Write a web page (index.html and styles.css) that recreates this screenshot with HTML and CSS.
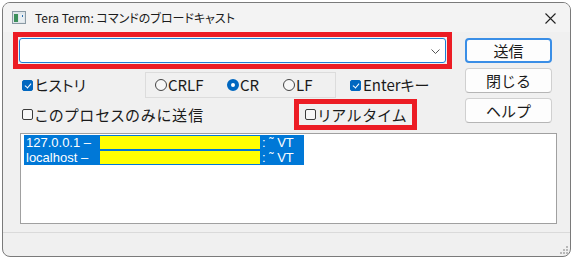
FILE: index.html
```html
<!DOCTYPE html>
<html lang="ja">
<head>
    <meta charset="UTF-8">
    <title>Tera Term: コマンドのブロードキャスト</title>
    <link rel="stylesheet" href="styles.css">
</head>
<body>
    <div class="window">
        <div class="titlebar">
            <svg class="app-icon" width="14" height="13" viewBox="0 0 14 13">
                <rect x="0.5" y="0.5" width="13" height="12" fill="#dfe6ea" stroke="#8a9aa4"/>
                <rect x="2" y="3" width="4" height="8" fill="#3c8f5a"/>
                <rect x="7" y="3" width="5" height="8" fill="#e8eef2"/>
                <rect x="10" y="4" width="1" height="2" fill="#2a6fb0"/>
            </svg>
            <span class="title">Tera Term: コマンドのブロードキャスト</span>
            <svg class="close" width="11" height="11" viewBox="0 0 11 11">
                <path d="M0.5 0.5 L10.5 10.5 M10.5 0.5 L0.5 10.5" stroke="#222" stroke-width="1.1"/>
            </svg>
        </div>

        <div class="content">
            <div class="top">
                <div class="main">
                    <div class="mark combo-mark">
                        <div class="combo">
                            <svg class="chevron" width="9" height="5" viewBox="0 0 9 5">
                                <path d="M0.5 0.5 L4.5 4.5 L8.5 0.5" fill="none" stroke="#555" stroke-width="1"/>
                            </svg>
                        </div>
                    </div>

                    <div class="options">
                        <label class="check history"><span class="box checked"></span>ヒストリ</label>
                        <div class="group">
                            <label class="radio r-crlf"><span class="dot"></span>CRLF</label>
                            <label class="radio r-cr"><span class="dot on"></span>CR</label>
                            <label class="radio r-lf"><span class="dot"></span>LF</label>
                        </div>
                        <label class="check enter"><span class="box checked"></span>Enterキー</label>
                    </div>

                    <div class="options second">
                        <label class="check only"><span class="box"></span>このプロセスのみに送信</label>
                        <div class="mark realtime-mark">
                            <label class="check realtime"><span class="box"></span>リアルタイム</label>
                        </div>
                    </div>
                </div>

                <div class="buttons">
                    <button class="default">送信</button>
                    <button>閉じる</button>
                    <button>ヘルプ</button>
                </div>
            </div>

            <div class="list">
                <div class="row"><span class="host">127.0.0.1 –</span><span class="hide"></span><span class="tail">: ˜ VT</span></div>
                <div class="row"><span class="host">localhost –</span><span class="hide"></span><span class="tail">: ˜ VT</span></div>
            </div>
        </div>

        <div class="statusbar">
            <svg class="grip" width="9" height="9" viewBox="0 0 9 9">
                <rect x="7" y="1" width="2" height="2" fill="#b8b8b8"/>
                <rect x="4" y="4" width="2" height="2" fill="#b8b8b8"/>
                <rect x="7" y="4" width="2" height="2" fill="#b8b8b8"/>
                <rect x="1" y="7" width="2" height="2" fill="#b8b8b8"/>
                <rect x="4" y="7" width="2" height="2" fill="#b8b8b8"/>
                <rect x="7" y="7" width="2" height="2" fill="#b8b8b8"/>
            </svg>
        </div>
    </div>
</body>
</html>
```

FILE: styles.css
```css
* {
    box-sizing: border-box;
}
body {
    margin: 0;
    background: #ffffff;
    font-family: "Noto Sans CJK JP", "Noto Sans", sans-serif;
    font-feature-settings: "palt";
    color: #1a1a1a;
}
.window {
    margin: 2px 0 0 2px;
    width: 569px;
    height: 255px;
    border: 1px solid #7a7a7a;
    border-radius: 8px;
    background: #f0f0f0;
    overflow: hidden;
    display: flex;
    flex-direction: column;
}
.titlebar {
    height: 29px;
    display: flex;
    align-items: center;
    padding: 0 14px 0 9px;
    background: #f3f3f3;
}
.app-icon {
    flex: none;
}
.title {
    margin-left: 9px;
    font-size: 12px;
    flex: 1;
    color: #1b1b1b;
}
.close {
    flex: none;
    margin-top: 1px;
}
.content {
    padding: 0 0 0 10px;
}
.top {
    display: flex;
    gap: 13px;
}
.main {
    width: 439px;
}
.mark {
    border: 5px solid #ec1c24;
}
.combo-mark {
    padding: 1px;
    height: 37px;
}
.combo {
    height: 25px;
    background: #ffffff;
    border: 1px solid #1d7fd6;
    border-radius: 3px;
    display: flex;
    align-items: center;
    justify-content: flex-end;
    padding-right: 5px;
}
.chevron {
    margin-top: 2px;
}
.options {
    display: flex;
    align-items: center;
    margin-top: 3px;
    height: 26px;
    font-size: 15px;
}
.check, .radio {
    display: flex;
    align-items: center;
    white-space: nowrap;
    line-height: 16px;
}
.box {
    flex: none;
    width: 11px;
    height: 11px;
    border: 1px solid #3b3b3b;
    border-radius: 2px;
    background: #f7f7f7;
    margin-right: 2px;
    position: relative;
}
.box.checked {
    background: #0067c0;
    border-color: #0067c0;
}
.box.checked::after {
    content: "";
    position: absolute;
    left: 3px;
    top: 1px;
    width: 3px;
    height: 5px;
    border: solid #ffffff;
    border-width: 0 1px 1px 0;
    transform: rotate(40deg);
}
.history {
    margin-left: 9px;
    width: 123px;
}
.group {
    width: 191px;
    height: 26px;
    border: 1px solid #dcdcdc;
    display: flex;
    align-items: center;
    padding-left: 9px;
}
.dot {
    flex: none;
    width: 12px;
    height: 12px;
    border: 1px solid #444;
    border-radius: 50%;
    margin-right: 1px;
    background: #f7f7f7;
}
.dot.on {
    border: 4px solid #0067c0;
    background: #ffffff;
}
.r-crlf {
    width: 72px;
}
.r-cr {
    width: 56px;
}
.enter {
    margin-left: 14px;
}
.second {
    height: 31px;
    margin-top: 1px;
}
.only {
    margin-left: 9px;
    width: 272px;
    letter-spacing: 1.1px;
}
.realtime-mark {
    height: 31px;
    width: 123px;
    display: flex;
    align-items: center;
    padding-left: 6px;
}
.realtime {
    letter-spacing: 1.6px;
}
.buttons {
    padding-top: 6px;
    display: flex;
    flex-direction: column;
    gap: 5px;
}
button {
    width: 87px;
    height: 25px;
    background: #fdfdfd;
    border: 1px solid #d0d0d0;
    border-bottom-color: #b5b5b5;
    border-radius: 4px;
    font-family: inherit;
    font-size: 15px;
    color: #1a1a1a;
    padding: 0;
    line-height: 1;
}
button.default {
    border: 2px solid #3a8ee6;
}
.list {
    margin: 3px 0 0 7px;
    width: 537px;
    height: 91px;
    background: #ffffff;
    border: 1px solid #a0a0a0;
    padding: 1px 0 0 3px;
    font-family: "Liberation Sans", "Noto Sans", sans-serif;
    font-size: 13px;
}
.row {
    width: 280px;
    height: 15px;
    background: #0078d7;
    color: #ffffff;
    display: flex;
    align-items: center;
    line-height: 15px;
    padding-left: 2px;
}
.host {
    width: 74px;
    white-space: nowrap;
}
.hide {
    flex: none;
    width: 160px;
    height: 13px;
    background: #ffff00;
    margin-right: 2px;
}
.tail {
    white-space: nowrap;
}
.statusbar {
    margin-top: 8px;
    border-top: 1px solid #dadada;
    flex: 1;
    display: flex;
    justify-content: flex-end;
    align-items: flex-end;
    padding: 0 2px 2px 0;
}
```
